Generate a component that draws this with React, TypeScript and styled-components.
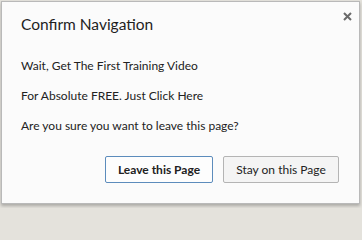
import React from 'react';
import styled, { createGlobalStyle } from 'styled-components';

const GlobalStyle = createGlobalStyle`
  html, body {
    margin: 0;
    padding: 0;
    background: #e4e2dc;
  }
  body {
    font-family: Lato, "Open Sans", "Liberation Sans", sans-serif;
  }
`;

const Page = styled.div`
  width: 362px;
  height: 208px;
  padding: 1px 0 0 1px;
  box-sizing: border-box;
`;

const Dialog = styled.div`
  width: 359px;
  height: 203px;
  box-sizing: border-box;
  background: #fbfbfb;
  border: 1px solid #b9b9b9;
  box-shadow: 0 2px 3px rgba(0, 0, 0, 0.25);
  padding: 12px 20px 20px 19px;
  display: flex;
  flex-direction: column;
  position: relative;
`;

const Header = styled.div`
  display: flex;
  align-items: flex-start;
  justify-content: space-between;
`;

const Title = styled.h1`
  margin: 0;
  font-size: 15.5px;
  line-height: 21px;
  font-weight: 400;
  color: #1e1e1e;
`;

const Close = styled.button`
  position: absolute;
  top: 7px;
  right: 5px;
  width: 14px;
  height: 14px;
  padding: 0;
  border: none;
  background: none;
  display: flex;
  align-items: center;
  justify-content: center;
`;

const Body = styled.div`
  margin-top: 23px;
  display: flex;
  flex-direction: column;
  gap: 14px;
`;

const Line = styled.p`
  margin: 0;
  font-size: 12px;
  line-height: 16px;
  color: #222;
`;

const Actions = styled.div`
  margin-top: auto;
  display: flex;
  justify-content: flex-end;
  gap: 10px;
`;

const Button = styled.button<{ $primary?: boolean }>`
  height: 27px;
  box-sizing: border-box;
  padding: 0;
  white-space: nowrap;
  font-family: inherit;
  font-size: 12px;
  font-weight: ${p => (p.$primary ? 700 : 400)};
  color: #222;
  background: ${p => (p.$primary ? '#fdfdfd' : '#f4f4f4')};
  border: 1px solid ${p => (p.$primary ? '#5c8cbc' : '#b4b4b4')};
  border-radius: 2px;
  width: ${p => (p.$primary ? '108px' : '116px')};
`;

export default function App() {
  return (
    <>
      <GlobalStyle />
      <Page>
        <Dialog>
          <Header>
            <Title>Confirm Navigation</Title>
            <Close aria-label="Close">
              <svg width="9" height="9" viewBox="0 0 9 9">
                <path d="M1 1 L8 8 M8 1 L1 8" stroke="#6a6a6a" strokeWidth="2" />
              </svg>
            </Close>
          </Header>
          <Body>
            <Line>Wait, Get The First Training Video</Line>
            <Line>For Absolute FREE. Just Click Here</Line>
            <Line>Are you sure you want to leave this page?</Line>
          </Body>
          <Actions>
            <Button $primary>Leave this Page</Button>
            <Button>Stay on this Page</Button>
          </Actions>
        </Dialog>
      </Page>
    </>
  );
}
